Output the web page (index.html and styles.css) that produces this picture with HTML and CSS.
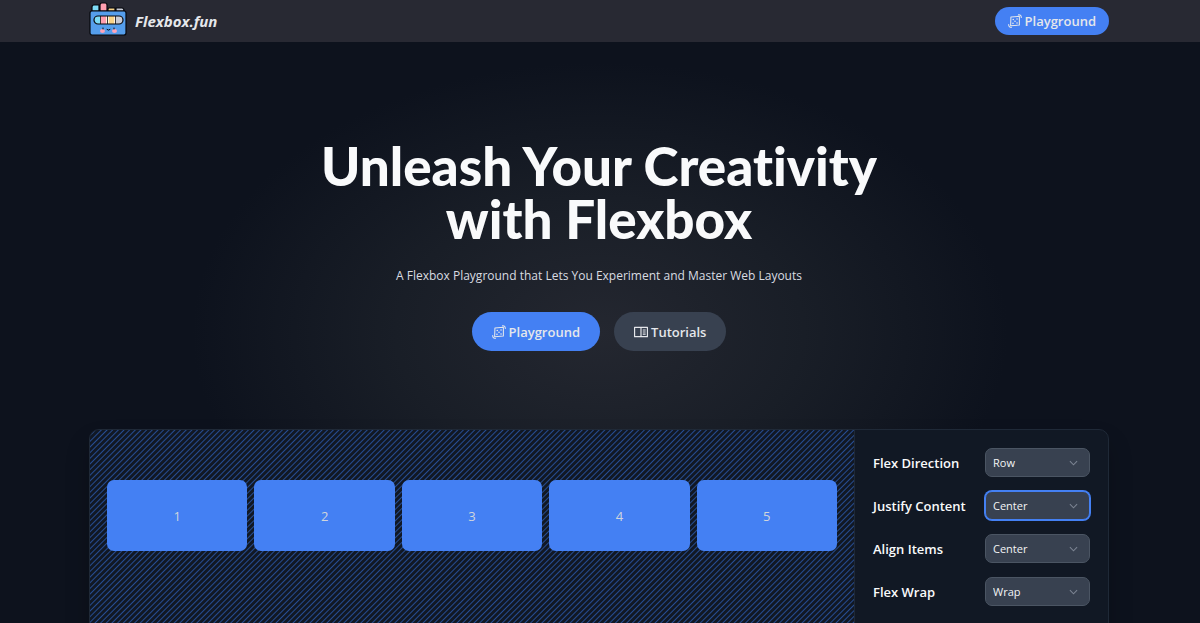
FILE: index.html
```html
<!DOCTYPE html>
<html lang="en">
<head>
<meta charset="utf-8">
<meta name="viewport" content="width=device-width, initial-scale=1">
<title>Flexbox.fun</title>
<link rel="stylesheet" href="styles.css">
</head>
<body>
<svg class="defs" aria-hidden="true">
  <symbol id="play" viewBox="0 0 24 24">
    <g fill="none" stroke="currentColor" stroke-width="1.8" stroke-linecap="round" stroke-linejoin="round">
      <path d="M5 5L19.500 4L19.500 19L4.500 20Z"/>
      <path d="M18 1.500Q22.800 1 22.800 6M1.200 18Q1 22.800 6 22.800"/>
    </g>
    <g fill="currentColor"><circle cx="9" cy="9.500" r="1.400"/><circle cx="15.500" cy="8.500" r="1.400"/><circle cx="12" cy="12.500" r="1.400"/><circle cx="8.500" cy="16" r="1.400"/><circle cx="15.500" cy="15.500" r="1.400"/></g>
  </symbol>
</svg>
<header class="header">
  <div class="wrap bar">
    <a class="brand" href="#">
      <svg class="logo" viewBox="0 0 40 34" aria-hidden="true">
        <g stroke="#05070c" stroke-width="1.200" stroke-linejoin="round">
          <path fill="#7edcf7" d="M3 9V5Q3 3 5 3H10V9Z"/>
          <path fill="#ff9fb0" d="M11 9V3Q11 1 13 1H16Q18 1 18 3V9Z"/>
          <path fill="#f8d489" d="M19 9V7Q19 6 20 6H26V9Z"/>
          <path fill="#c9ccd6" d="M27 9V6H33Q35 6 35 9Z"/>
          <rect x="1" y="9" width="36" height="24" rx="2" fill="#559eec"/>
        </g>
        <rect x="5" y="14" width="29" height="8" rx="4" fill="#fff0dc"/>
        <path fill="#7edcf7" d="M9 14H11V22H9Q5 22 5 18T9 14Z"/>
        <path fill="#ff9fb0" d="M12 14H17V22H12Z"/><path fill="#f8d489" d="M20 14H25V22H20Z"/>
        <path fill="#c9ccd6" d="M27 14H30Q34 14 34 18T30 22H27Z"/>
        <path d="M11.500 14V22M18.500 14V22M26.500 14V22" stroke="#05070c" stroke-width=".8"/>
        <rect x="5" y="14" width="29" height="8" rx="4" fill="none" stroke="#05070c" stroke-width="1.200"/>
        <ellipse cx="13.500" cy="29" rx="2.500" ry="2" fill="#ffa4b8"/><ellipse cx="25.500" cy="29" rx="2.500" ry="2" fill="#ffa4b8"/>
        <path d="M14 26V27M25 26V27M18 27.500Q19.500 29 21 27.500" fill="none" stroke="#05070c" stroke-linecap="round"/>
      </svg>
      <span>Flexbox.fun</span>
    </a>
    <a class="btn small primary" href="#"><svg class="icon" aria-hidden="true"><use href="#play"/></svg>Playground</a>
  </div>
</header>
<main class="main">
  <section class="hero">
    <h1>Unleash Your Creativity<br>with Flexbox</h1>
    <p>A Flexbox Playground that Lets You Experiment and Master Web Layouts</p>
    <div class="actions">
      <a class="btn primary" href="#"><svg class="icon" aria-hidden="true"><use href="#play"/></svg>Playground</a>
      <a class="btn secondary" href="#"><svg class="icon" viewBox="0 0 24 24" aria-hidden="true"><path fill="none" stroke="currentColor" stroke-width="2" stroke-linejoin="round" d="M1 4H23V20H1ZM12 4V20M15 8.500H20M15 12H20M15 15.500H20"/></svg>Tutorials</a>
    </div>
  </section>
  <section class="wrap demo">
    <div class="stage">
      <div class="item">1</div><div class="item">2</div><div class="item">3</div><div class="item">4</div><div class="item">5</div>
    </div>
    <form class="controls">
      <label for="direction">Flex Direction</label>
      <select id="direction"><option>Row</option><option>Column</option></select>
      <label for="justify">Justify Content</label>
      <select id="justify" class="active"><option>Center</option><option>Start</option><option>End</option></select>
      <label for="align">Align Items</label>
      <select id="align"><option>Center</option><option>Start</option><option>End</option></select>
      <label for="wrap">Flex Wrap</label>
      <select id="wrap"><option>Wrap</option><option>No Wrap</option></select>
    </form>
  </section>
</main>
</body>
</html>
```
FILE: styles.css
```css
* { box-sizing: border-box; }
body {
  margin: 0;
  height: 100vh;
  overflow: hidden;
  display: flex;
  flex-direction: column;
  background: #0e131d;
  color: #f9fafb;
  font-family: "Open Sans", "Noto Sans", sans-serif;
  font-size: 13px;
}
.defs { display: none; }
a { color: inherit; text-decoration: none; }
.wrap { width: calc(100% - 178px); margin: 0 auto; }
.header { background: #282933; padding-right: 2px; }
.bar {
  display: flex;
  align-items: center;
  justify-content: space-between;
  height: 42px;
}
.brand {
  display: flex;
  align-items: center;
  gap: 6px;
  font-size: 15px;
  font-weight: 700;
  font-style: italic;
  color: #e5e7eb;
}
.logo { width: 40px; height: 34px; margin-bottom: 4px; }
.btn {
  display: inline-flex;
  align-items: center;
  gap: 3px;
  height: 39px;
  padding: 0 20px;
  border-radius: 20px;
  font-size: 13px;
  font-weight: 600;
  color: #e5e7eb;
}
.small { height: 28px; padding: 0 13px; }
.primary { background: #4480f3; }
.secondary { background: #384150; }
.icon { width: 14px; height: 14px; }
.main {
  flex: 1;
  min-height: 0;
  overflow: hidden;
  padding-right: 2px;
  background: radial-gradient(ellipse 408px 270px at 50% 50%, #242730 0%, #191e27 50%, #0d121d 100%);
}
.hero {
  display: flex;
  flex-direction: column;
  align-items: center;
  padding: 97px 24px 78px;
  text-align: center;
}
h1 {
  margin: 0;
  font-family: Lato, "Open Sans", sans-serif;
  font-size: 53px;
  line-height: 53px;
  font-weight: 900;
  font-variant-ligatures: none;
}
p { margin: 20px 0 25px; font-size: 12px; line-height: 22px; color: #d9dce1; }
.actions { display: flex; gap: 14px; }
.demo {
  display: grid;
  grid-template-columns: 1fr 253px;
  height: 348px;
  border: 1px solid #1f2937;
  border-radius: 10px;
  overflow: hidden;
  background: #111824;
  box-shadow: 0 14px 24px #0003;
}
.stage {
  display: flex;
  align-items: flex-start;
  gap: 7px;
  padding: 50px 17px;
  border-right: 1px solid #1f2937;
  background: repeating-linear-gradient(135deg, #264c92 0, #111824 1px 3px, #264c92 4px);
}
.item {
  flex: 1;
  height: 71px;
  display: grid;
  place-items: center;
  border-radius: 7px;
  background: #4480f3;
  color: #d1d5db;
}
.controls {
  display: grid;
  grid-template-columns: 1fr 105px;
  grid-auto-rows: 29px;
  align-items: center;
  row-gap: 14px;
  padding: 18px;
}
label { font-weight: 600; white-space: nowrap; }
select {
  appearance: none;
  width: 105px;
  height: 29px;
  padding: 0 7px;
  border: 1px solid #4b5563;
  border-radius: 7px;
  color: #f3f4f6;
  font: 11px "Open Sans", sans-serif;
  background: #384150 url("data:image/svg+xml,%3Csvg xmlns='http://www.w3.org/2000/svg' viewBox='0 0 10 6' fill='none' stroke='%237b8492' stroke-width='1.200'%3E%3Cpath d='M1 1L5 5L9 1'/%3E%3C/svg%3E") no-repeat right 11px center / 9px 6px;
}
.active { border-color: #4480f3; box-shadow: 0 0 0 1px #4480f3; }
```
